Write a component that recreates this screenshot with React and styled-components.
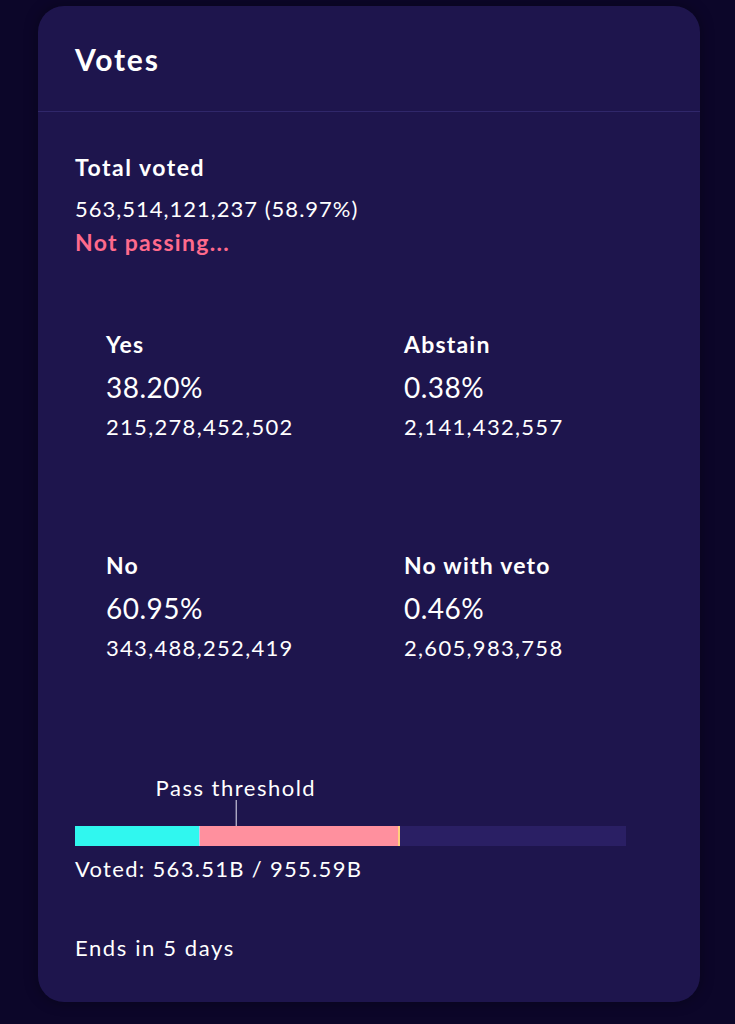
import styled, { createGlobalStyle } from "styled-components";

const GlobalStyle = createGlobalStyle`
  html, body {
    margin: 0;
    padding: 0;
    background-color: #0c0629;
  }
  body {
    font-family: "Lato", "Noto Sans", sans-serif;
    color: #ffffff;
  }
`;

const Page = styled.div`
  padding: 6px 35px 22px 38px;
  min-height: 1024px;
  box-sizing: border-box;
`;

const Card = styled.section`
  width: 662px;
  background-color: #1e154d;
  border-radius: 26px;
  box-shadow: 0 0 14px rgba(0, 0, 0, 0.35);
  padding-bottom: 42px;
`;

const Header = styled.header`
  height: 105px;
  display: flex;
  align-items: center;
  padding: 0 37px;
  border-bottom: 1px solid #30276a;
`;

const Title = styled.h2`
  margin: 0;
  font-size: 30px;
  font-weight: 700;
  letter-spacing: 1.8px;
`;

const Body = styled.div`
  padding: 43px 37px 0;
`;

const Label = styled.div`
  font-size: 23px;
  line-height: 24px;
  font-weight: 700;
  letter-spacing: ${({ $wide }) => ($wide ? "1.5px" : "1.2px")};
`;

const Text = styled.div`
  font-size: 22px;
  line-height: 24px;
  letter-spacing: ${({ $spacing }) => $spacing || "1.3px"};
  margin-top: ${({ $top }) => $top || 0}px;
  color: ${({ $color }) => $color || "#ffffff"};
  font-weight: ${({ $bold }) => ($bold ? 700 : 400)};
  font-size: ${({ $bold }) => ($bold ? "23px" : "22px")};
`;

const Grid = styled.div`
  display: grid;
  grid-template-columns: 298px 1fr;
  row-gap: 114px;
  padding: 78px 0 0 31px;
`;

const Option = styled.div`
  display: flex;
  flex-direction: column;
`;

const Percent = styled.div`
  margin-top: 15px;
  font-size: 28px;
  line-height: 32px;
  letter-spacing: 0.5px;
`;

const Amount = styled.div`
  margin-top: 12px;
  font-size: 22px;
  line-height: 24px;
  letter-spacing: 1.3px;
`;

const BarBlock = styled.div`
  position: relative;
  width: 551px;
  margin-top: 116px;
  padding-top: 50px;
`;

const Threshold = styled.div`
  position: absolute;
  top: 0;
  transform: translateX(-50%);
  display: flex;
  flex-direction: column;
  align-items: center;
`;

const ThresholdLabel = styled.span`
  font-size: 22px;
  line-height: 24px;
  letter-spacing: 1.5px;
  white-space: nowrap;
`;

const Tick = styled.span`
  width: 1px;
  height: 26px;
  background-color: #e8e6f5;
`;

const Bar = styled.div`
  display: flex;
  height: 20px;
  background-color: #2a1f64;
`;

const Segment = styled.div`
  height: 100%;
  background-color: ${({ $color }) => $color};
`;

const votes = [
  { label: "Yes", percent: "38.20%", amount: "215,278,452,502", value: 215278452502, color: "#30f7ef" },
  { label: "Abstain", percent: "0.38%", amount: "2,141,432,557", value: 2141432557, color: "#c9c3e6" },
  { label: "No", percent: "60.95%", amount: "343,488,252,419", value: 343488252419, color: "#ff909e" },
  { label: "No with veto", percent: "0.46%", amount: "2,605,983,758", value: 2605983758, color: "#ffcf7d" },
];

const totalBonded = 955590000000;
const thresholdPct = 29.2;

const App = () => {
  return (
    <>
      <GlobalStyle />
      <Page>
        <Card>
          <Header>
            <Title>Votes</Title>
          </Header>
          <Body>
            <Label $wide>Total voted</Label>
            <Text $top={18} $spacing="1px">563,514,121,237 (58.97%)</Text>
            <Text $top={9} $bold $color="#ff6a8c">Not passing...</Text>

            <Grid>
              {votes.map((v) => (
                <Option key={v.label}>
                  <Label>{v.label}</Label>
                  <Percent>{v.percent}</Percent>
                  <Amount>{v.amount}</Amount>
                </Option>
              ))}
            </Grid>

            <BarBlock>
              <Threshold style={{ left: `${thresholdPct}%` }}>
                <ThresholdLabel>Pass threshold</ThresholdLabel>
                <Tick />
              </Threshold>
              <Bar>
                {votes.map((v) => (
                  <Segment
                    key={v.label}
                    $color={v.color}
                    style={{ width: `${(v.value / totalBonded) * 100}%` }}
                  />
                ))}
              </Bar>
            </BarBlock>
            <Text $top={11}>Voted: 563.51B / 955.59B</Text>
            <Text $top={55} $spacing="1.6px">Ends in 5 days</Text>
          </Body>
        </Card>
      </Page>
    </>
  );
};

export default App;
